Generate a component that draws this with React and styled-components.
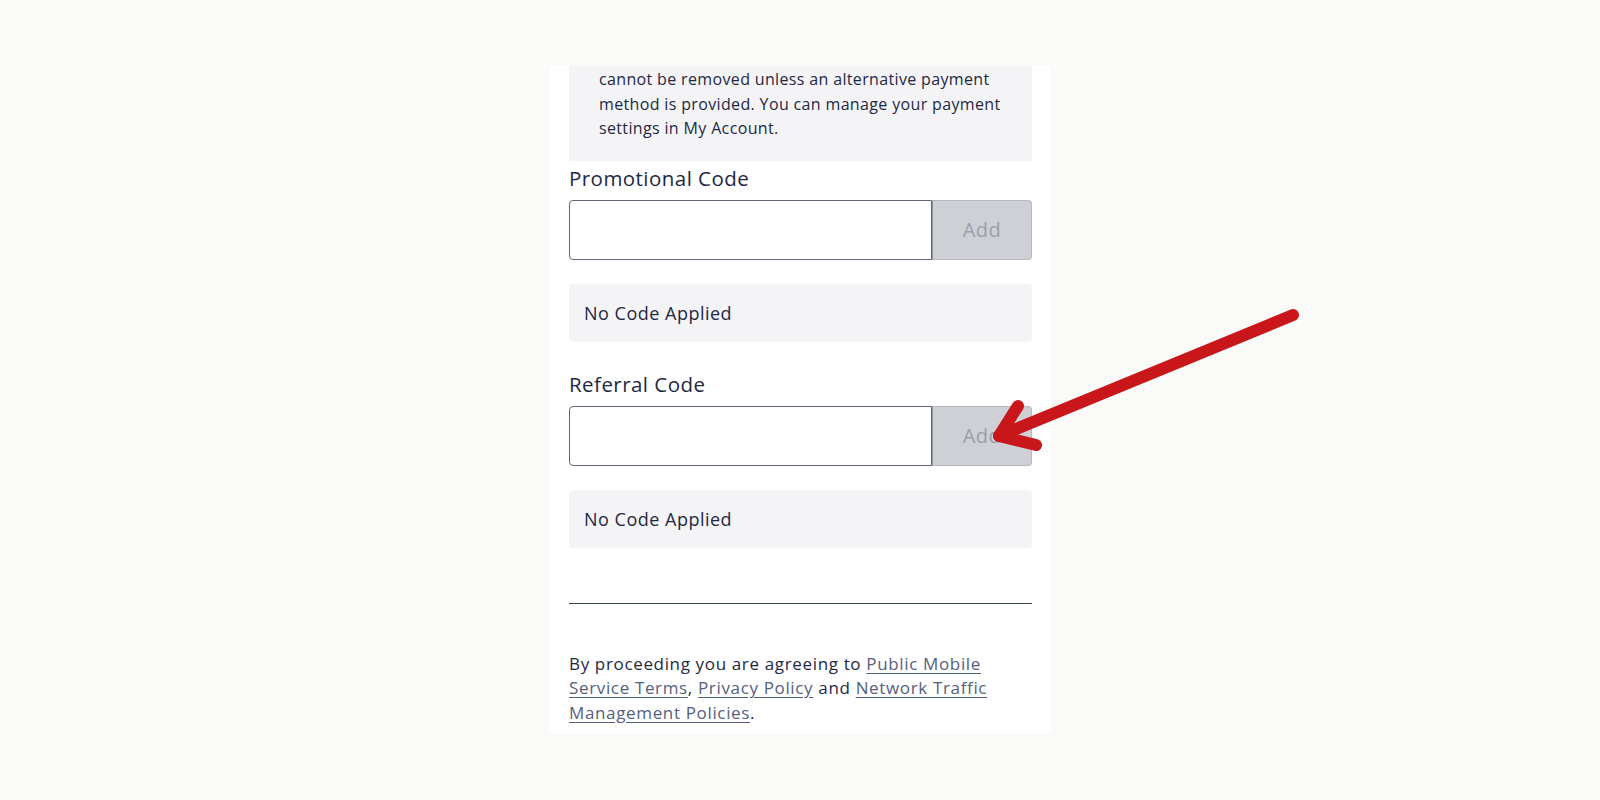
import React from "react";
import styled, { createGlobalStyle } from "styled-components";

const GlobalStyle = createGlobalStyle`
  html, body {
    margin: 0;
    padding: 0;
    background: #fafaf9;
  }
  body {
    font-family: "Open Sans", "Noto Sans", sans-serif;
    color: #1e2845;
  }
`;

const Page = styled.div`
  position: relative;
  width: 1600px;
  height: 800px;
  overflow: hidden;
  display: flex;
  align-items: flex-start;
`;

const Card = styled.div`
  margin: 66px 0 0 549px;
  width: 502px;
  box-sizing: border-box;
  padding: 0 19px 8px 20px;
  background: #ffffff;
`;

const InfoBox = styled.div`
  background: #f4f4f6;
  padding: 1px 20px 20px 30px;
  font-size: 16px;
  letter-spacing: 0.35px;
  line-height: 24.5px;
  white-space: nowrap;
  color: #1e2845;
`;

const Label = styled.div`
  font-size: 20.5px;
  letter-spacing: 0.45px;
  line-height: 26px;
  margin-top: ${(p) => p.top}px;
  color: #1e2845;
`;

const CodeRow = styled.div`
  display: flex;
  height: 60px;
  margin-top: 9px;
`;

const CodeInput = styled.input`
  flex: 1;
  min-width: 0;
  box-sizing: border-box;
  border: 1px solid #626879;
  border-radius: 4px 0 0 4px;
  background: #fff;
  font: inherit;
  padding: 0 14px;
  outline: none;
`;

const AddButton = styled.button`
  width: 100px;
  box-sizing: border-box;
  border: 1px solid #b7b9c1;
  border-left: 1px solid #8b8f9c;
  border-radius: 0 4px 4px 0;
  background: #cfd0d6;
  color: #9c9eab;
  font-family: inherit;
  font-size: 20px;
  letter-spacing: 0.4px;
`;

const StatusBox = styled.div`
  margin-top: 24px;
  height: 58px;
  display: flex;
  align-items: center;
  padding: 0 15px;
  background: #f4f4f6;
  border-radius: 4px;
  font-size: 18px;
  letter-spacing: 0.5px;
  color: #1e2845;
`;

const Divider = styled.hr`
  margin: 55px 0 0;
  border: none;
  border-top: 1px solid #31464d;
`;

const Terms = styled.p`
  margin: 48px 0 0;
  font-size: 17px;
  letter-spacing: 0.65px;
  line-height: 24.5px;
  white-space: nowrap;
  color: #1e2845;
`;

const TermsLink = styled.a`
  color: #55607e;
  text-decoration: underline;
  text-underline-offset: 3px;
`;

const Arrow = styled.svg`
  position: absolute;
  left: 0;
  top: 0;
  pointer-events: none;
`;

function CodeSection({ label, top }) {
  return (
    <>
      <Label top={top}>{label}</Label>
      <CodeRow>
        <CodeInput type="text" />
        <AddButton type="button">Add</AddButton>
      </CodeRow>
      <StatusBox>No Code Applied</StatusBox>
    </>
  );
}

export default function App() {
  return (
    <Page>
      <GlobalStyle />
      <Card>
        <InfoBox>
          cannot be removed unless an alternative payment
          <br />
          method is provided. You can manage your payment
          <br />
          settings in My Account.
        </InfoBox>
        <CodeSection label="Promotional Code" top={4} />
        <CodeSection label="Referral Code" top={29} />
        <Divider />
        <Terms>
          By proceeding you are agreeing to <TermsLink href="#">Public Mobile</TermsLink>
          <br />
          <TermsLink href="#">Service Terms</TermsLink>, <TermsLink href="#">Privacy Policy</TermsLink> and{" "}
          <TermsLink href="#">Network Traffic</TermsLink>
          <br />
          <TermsLink href="#">Management Policies</TermsLink>.
        </Terms>
      </Card>
      <Arrow width="1600" height="800" viewBox="0 0 1600 800">
        <g stroke="#c8161a" strokeWidth="12" strokeLinecap="round" strokeLinejoin="round" fill="none">
          <line x1="1293" y1="315" x2="999" y2="436" />
          <polyline points="1018,406 999,436 1036,445" />
        </g>
      </Arrow>
    </Page>
  );
}
